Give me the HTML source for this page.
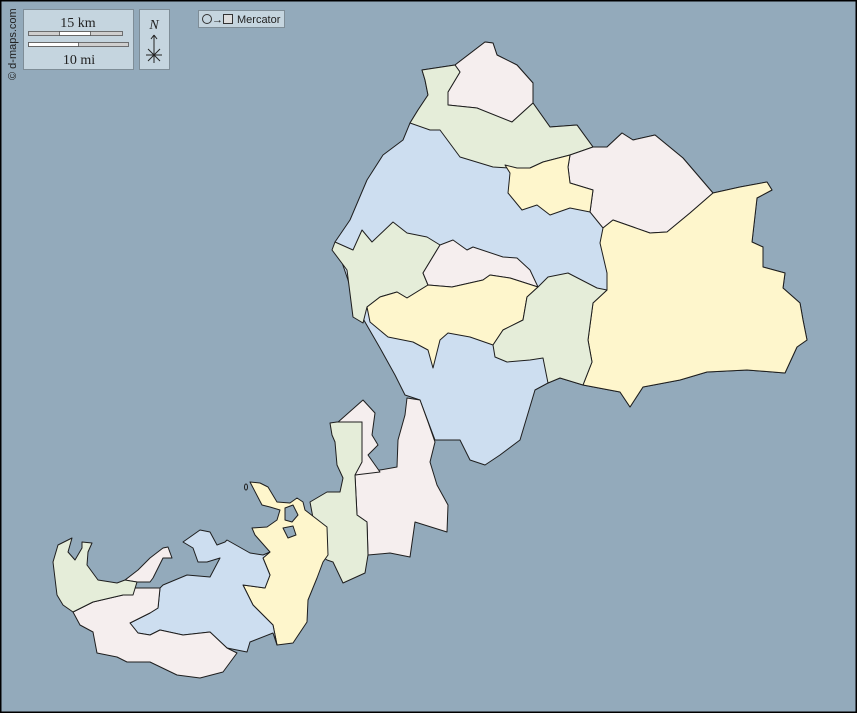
<!DOCTYPE html>
<html><head><meta charset="utf-8"><style>
html,body{margin:0;padding:0;width:857px;height:713px;overflow:hidden;background:#93aabb}
svg{display:block}
</style></head><body>
<svg width="857" height="713" viewBox="0 0 857 713" xmlns="http://www.w3.org/2000/svg">
<rect x="0.5" y="0.5" width="856" height="712" fill="#93aabb" stroke="#000" stroke-width="2"/>
<g stroke="#1e1e1e" stroke-width="1" stroke-linejoin="round">
<polygon fill="#cddef0" points="422,70 455,65 485,42 493,43 497,55 517,65 533,83 533,103 550,127 577,125 593,147 607,147 622,133 633,140 655,135 683,158 713,193 740,187 767,182 772,190 757,198 752,242 763,247 763,267 785,273 783,288 800,303 803,320 807,340 797,347 785,373 747,370 707,372 680,380 643,387 630,407 620,392 583,385 560,378 548,383 535,390 520,440 500,455 485,465 470,460 460,440 435,440 420,400 405,395 395,375 380,348 365,322 355,305 348,280 335,242 350,220 367,180 383,155 403,140 410,123 418,110 428,95 425,80"/>
<polygon fill="#f5eeee" points="455,65 485,42 493,43 497,55 517,65 533,83 533,103 512,122 497,118 477,108 448,105 448,92 460,72"/>
<polygon fill="#e5edd9" points="422,70 455,65 460,72 448,92 448,105 477,108 512,122 533,103 550,127 577,125 593,147 570,155 543,162 530,168 510,168 493,167 460,157 440,130 430,130 410,123 418,110 428,95 425,80"/>
<polygon fill="#f5eeee" points="570,155 593,147 607,147 622,133 633,140 655,135 683,158 713,193 690,213 667,232 650,233 613,220 603,228 590,212 593,190 570,183 568,167"/>
<polygon fill="#fef6cc" points="505,165 517,168 530,168 543,162 570,155 568,167 570,183 593,190 590,212 570,208 550,215 537,205 522,210 508,193 510,173"/>
<polygon fill="#fef6cc" points="603,228 613,220 650,233 667,232 690,213 713,193 740,187 767,182 772,190 757,198 752,242 763,247 763,267 785,273 783,288 800,303 803,320 807,340 797,347 785,373 747,370 707,372 680,380 643,387 630,407 620,392 583,385 592,362 588,340 593,303 607,290 607,273 600,243"/>
<polygon fill="#e5edd9" points="335,242 353,250 362,230 372,242 393,222 407,233 427,237 440,245 423,273 428,285 407,298 397,292 380,297 367,307 363,323 353,317 347,270 332,250"/>
<polygon fill="#f5eeee" points="440,245 453,240 467,250 473,247 503,257 517,258 530,270 538,287 510,278 490,275 483,280 452,287 428,285 423,273"/>
<polygon fill="#fef6cc" points="367,307 380,297 397,292 407,298 428,285 452,287 483,280 490,275 510,278 538,287 527,297 523,320 503,330 493,345 470,337 448,333 440,340 433,368 428,350 413,342 388,337 370,322"/>
<polygon fill="#e5edd9" points="538,287 548,277 568,273 597,288 607,290 593,303 588,340 592,362 583,385 560,378 548,383 543,358 530,360 507,362 495,357 493,345 503,330 523,320 527,297"/>
<polygon fill="#f5eeee" points="407,398 420,400 428,422 435,442 430,462 437,485 448,505 447,532 415,522 410,557 390,553 368,555 367,522 357,515 355,475 380,470 397,467 398,440 405,415"/>
<polygon fill="#f5eeee" points="337,423 363,400 375,413 372,435 378,445 368,455 380,472 355,475 362,422"/>
<polygon fill="#e5edd9" points="330,423 337,422 362,422 362,462 355,475 357,515 367,522 368,555 365,573 343,583 333,562 327,560 320,555 310,502 327,492 340,492 343,478 337,465 335,442 332,435"/>
<polygon fill="#fef6cc" points="250,482 260,483 268,487 277,502 290,503 297,498 303,502 305,510 327,527 328,555 323,562 317,578 308,600 307,622 293,643 277,645 273,625 253,605 243,585 265,588 270,575 263,558 270,552 255,535 252,528 267,527 277,520 280,510 270,507 262,505"/>
<polygon fill="#cddef0" points="183,542 200,530 210,532 217,545 225,542 227,540 250,553 263,555 270,552 263,558 270,575 265,588 243,585 253,605 273,625 277,645 273,633 250,642 247,652 227,648 210,632 183,635 160,630 150,635 138,633 130,623 150,613 158,608 160,588 163,585 187,575 210,577 220,558 207,562 198,562 193,548"/>
<polygon fill="#f5eeee" points="73,612 93,602 123,595 133,588 160,588 158,608 150,613 130,623 138,633 150,635 160,630 183,635 210,632 227,648 237,653 223,672 200,678 177,675 150,662 127,662 117,657 97,653 93,632 80,625"/>
<polygon fill="#f5eeee" points="125,580 138,570 150,558 163,548 168,547 172,558 163,558 153,578 150,582 137,582"/>
<polygon fill="#e5edd9" points="57,595 53,562 58,545 72,538 68,552 75,560 82,548 82,542 92,543 88,552 87,565 98,580 117,583 125,580 137,582 133,595 123,595 93,602 73,612 63,605"/>
<polygon fill="#93aabb" points="285,508 293,505 298,515 292,522 285,520"/>
<polygon fill="#93aabb" points="283,528 293,526 296,535 288,538"/>
<ellipse cx="246" cy="487" rx="1.5" ry="3" fill="#93aabb"/>
</g>
<g font-family="Liberation Serif, serif" fill="#222">
<rect x="23.5" y="9.5" width="110" height="60" fill="#c5d5df" stroke="#7e8d97"/>
<text x="78" y="27" font-size="14" text-anchor="middle">15 km</text>
<rect x="28.5" y="31.5" width="94" height="4" fill="#cfcfcf" stroke="#555" stroke-width="0.8"/>
<rect x="59.5" y="31.5" width="31" height="4" fill="#fff" stroke="#555" stroke-width="0.8"/>
<rect x="28.5" y="42.5" width="100" height="4" fill="#cfcfcf" stroke="#555" stroke-width="0.8"/>
<rect x="28.5" y="42.5" width="50" height="4" fill="#fff" stroke="#555" stroke-width="0.8"/>
<text x="79" y="64" font-size="14" text-anchor="middle">10 mi</text>
<rect x="139.5" y="9.5" width="30" height="60" fill="#c5d5df" stroke="#7e8d97"/>
<text x="154" y="29" font-size="14" font-style="italic" text-anchor="middle">N</text>
<g stroke="#222" stroke-width="1" fill="none">
<line x1="154" y1="35" x2="154" y2="63"/><line x1="151" y1="39" x2="154" y2="35"/><line x1="157" y1="39" x2="154" y2="35"/>
<line x1="146" y1="55" x2="162" y2="55"/><line x1="148" y1="49" x2="160" y2="61"/><line x1="160" y1="49" x2="148" y2="61"/>
</g>
<rect x="198.5" y="10.5" width="86" height="17" fill="#c5d5df" stroke="#7e8d97"/>
<circle cx="207" cy="19" r="4.5" fill="none" stroke="#333"/>
<text x="212" y="23" font-size="11" font-family="Liberation Sans, sans-serif">→</text>
<rect x="223.5" y="14.5" width="9" height="9" fill="#ddd" stroke="#333"/>
<text x="237" y="23" font-size="11" font-family="Liberation Sans, sans-serif">Mercator</text>
<text transform="translate(16,80) rotate(-90)" font-size="11" font-family="Liberation Sans, sans-serif" fill="#222">© d-maps.com</text>
</g>
</svg>
</body></html>
